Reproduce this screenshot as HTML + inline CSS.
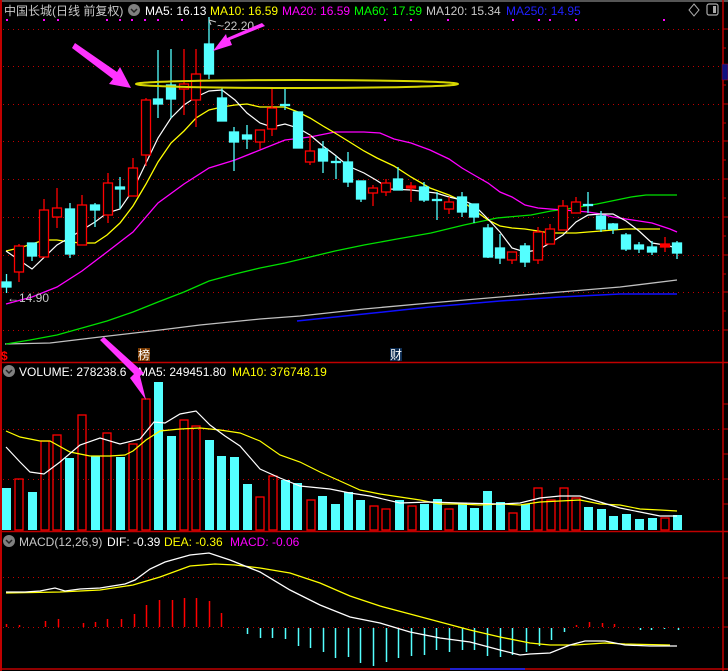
<!DOCTYPE html>
<html><head><meta charset="utf-8"><style>
html,body{margin:0;padding:0;background:#000;width:728px;height:671px;overflow:hidden}
svg{display:block}
text{font-family:"Liberation Sans","Noto Sans CJK SC",sans-serif;font-size:12px}
</style></head><body>
<svg width="728" height="671" viewBox="0 0 728 671" xmlns="http://www.w3.org/2000/svg">
<rect width="728" height="671" fill="#000"/>
<line x1="0" y1="1" x2="728" y2="1" stroke="#555" stroke-width="2"/>
<line x1="1" y1="0" x2="1" y2="671" stroke="#c00000" stroke-width="2"/>
<line x1="723" y1="0" x2="723" y2="671" stroke="#c00000" stroke-width="1.5"/>
<line x1="0" y1="362.5" x2="728" y2="362.5" stroke="#c00000" stroke-width="1.5"/>
<line x1="0" y1="531.5" x2="728" y2="531.5" stroke="#c00000" stroke-width="1.5"/>
<line x1="0" y1="669" x2="728" y2="669" stroke="#c00000" stroke-width="1.5"/>
<line x1="450" y1="669" x2="525" y2="669" stroke="#2020d0" stroke-width="2"/>
<g stroke="#c00000" stroke-width="1">
<line x1="723" y1="29" x2="728" y2="29"/><line x1="723" y1="48" x2="726" y2="48"/><line x1="723" y1="66" x2="728" y2="66"/><line x1="723" y1="85" x2="726" y2="85"/><line x1="723" y1="104" x2="728" y2="104"/><line x1="723" y1="123" x2="726" y2="123"/><line x1="723" y1="141" x2="728" y2="141"/><line x1="723" y1="160" x2="726" y2="160"/><line x1="723" y1="179" x2="728" y2="179"/><line x1="723" y1="198" x2="726" y2="198"/><line x1="723" y1="217" x2="728" y2="217"/><line x1="723" y1="236" x2="726" y2="236"/><line x1="723" y1="255" x2="728" y2="255"/><line x1="723" y1="274" x2="726" y2="274"/><line x1="723" y1="292" x2="728" y2="292"/><line x1="723" y1="311" x2="726" y2="311"/><line x1="723" y1="330" x2="728" y2="330"/>
<line x1="723" y1="404" x2="728" y2="404"/><line x1="723" y1="429" x2="728" y2="429"/><line x1="723" y1="454" x2="728" y2="454"/><line x1="723" y1="479" x2="728" y2="479"/><line x1="723" y1="504" x2="728" y2="504"/>
<line x1="723" y1="578" x2="728" y2="578"/><line x1="723" y1="627" x2="728" y2="627"/>
</g>
<rect x="722" y="64" width="6" height="16" fill="#101080" stroke="#c00000" stroke-width="0.5"/>
<g stroke="#c00000" stroke-width="1" stroke-dasharray="1,4">
<line x1="3" y1="29.5" x2="722" y2="29.5"/><line x1="3" y1="66.5" x2="722" y2="66.5"/><line x1="3" y1="104.5" x2="722" y2="104.5"/><line x1="3" y1="141.5" x2="722" y2="141.5"/><line x1="3" y1="179.5" x2="722" y2="179.5"/><line x1="3" y1="217.5" x2="722" y2="217.5"/><line x1="3" y1="255.5" x2="722" y2="255.5"/><line x1="3" y1="292.5" x2="722" y2="292.5"/><line x1="3" y1="330.5" x2="722" y2="330.5"/>
<line x1="3" y1="429.5" x2="722" y2="429.5"/><line x1="3" y1="479.5" x2="722" y2="479.5"/>
<line x1="3" y1="577.5" x2="722" y2="577.5"/><line x1="3" y1="627.5" x2="722" y2="627.5"/>
</g>
<g fill="#ff00ff"><rect x="6" y="19" width="2" height="2"/><rect x="43" y="19" width="2" height="2"/><rect x="57" y="19" width="2" height="2"/><rect x="106" y="19" width="2" height="2"/><rect x="119" y="19" width="2" height="2"/><rect x="131" y="19" width="2" height="2"/><rect x="144" y="19" width="2" height="2"/><rect x="157" y="19" width="2" height="2"/><rect x="181" y="19" width="2" height="2"/><rect x="384" y="19" width="2" height="2"/><rect x="410" y="19" width="2" height="2"/><rect x="447" y="19" width="2" height="2"/><rect x="512" y="19" width="2" height="2"/><rect x="538" y="19" width="2" height="2"/><rect x="549" y="19" width="2" height="2"/><rect x="575" y="19" width="2" height="2"/><rect x="663" y="19" width="2" height="2"/></g>
<text x="4" y="15" fill="#c8c8c8">中国长城(日线 前复权)</text>
<circle cx="134" cy="10" r="6" fill="#808080"/><path d="M131 9 L134 12 L137 9" stroke="#222" stroke-width="1.5" fill="none"/>
<text x="145" y="15" fill="#ffffff">MA5: 16.13</text>
<text x="210" y="15" fill="#ffff00">MA10: 16.59</text>
<text x="282" y="15" fill="#ff00ff">MA20: 16.59</text>
<text x="354" y="15" fill="#00ff00">MA60: 17.59</text>
<text x="426" y="15" fill="#c8c8c8">MA120: 15.34</text>
<text x="506" y="15" fill="#2020ff">MA250: 14.95</text>
<path d="M694 4 L699 10 L694 16 L689 10 Z" stroke="#aaa" fill="none"/>
<rect x="707" y="4" width="11" height="11" rx="2" stroke="#aaa" fill="none" stroke-width="1.2"/><rect x="713" y="6" width="3" height="7" fill="#aaa"/>
<polyline fill="none" stroke="#c0c0c0" stroke-width="1.3" points="5,344 50,343 100,337 160,330 200,325 260,319 300,316 364,309 430,303 500,297 560,292 620,287 677,280"/>
<polyline fill="none" stroke="#1010ff" stroke-width="1.5" points="297,321 364,314 430,307 500,301 560,297 620,294 677,294"/>
<polyline fill="none" stroke="#00e000" stroke-width="1.3" points="6,344 30,340 57,335 82,328 107,321 133,312 158,302 184,292 209,281 235,274 260,268 285,263 310,257 335,251 364,245 397,239 431,233 464,225 497,218 531,215 551,211 567,209 597,204 631,197 646,195 677,195"/>
<polyline fill="none" stroke="#ff00ff" stroke-width="1.3" points="6,304 32,297 57,287 82,271 107,252 133,232 158,203 184,184 209,168 235,160 260,150 285,140 310,137 335,132 364,132 380,133 394,139 411,143 430,150 449,159 462,168 474,175 488,183 500,192 512,197 525,205 538,208 550,209 563,210 576,211 588,212 601,214 613,217 626,219 652,223 670,229 677,232"/>
<polyline fill="none" stroke="#ffff00" stroke-width="1.3" points="6,251 19,248 32,244 44,240 57,240 69,242 82,243 95,243 107,235 120,223 133,206 146,184 158,162 171,143 184,131 196,118 209,110 222,107 235,105 247,104 260,107 272,107 285,107 298,112 310,118 323,126 335,133 348,141 364,151 377,158 394,166 411,177 430,188 449,195 462,201 474,210 488,220 500,226 512,228 525,229 538,231 550,233 563,233 576,233 588,232 601,231 613,230 626,229 639,229 660,229"/>
<polyline fill="none" stroke="#ffffff" stroke-width="1.2" points="6,251 32,269 57,245 69,238 95,222 107,213 120,209 133,190 146,163 158,138 171,118 184,105 196,97 209,91 222,90 235,100 247,113 260,123 272,127 285,124 298,128 310,135 323,146 335,155 348,166 364,173 376,180 390,189 411,190 436,193 449,197 462,200 474,205 488,219 500,232 512,248 525,252 538,250 550,243 563,235 576,222 588,215 601,214 613,214 626,221 639,231 652,243 665,245 677,248"/>
<g stroke-width="1.3">
<g stroke="#54ffff" fill="#54ffff">
<line x1="6.5" y1="274" x2="6.5" y2="293"/><rect x="2" y="282" width="9" height="5"/>
<line x1="32" y1="243" x2="32" y2="261"/><rect x="27.5" y="243" width="9" height="13"/>
<line x1="70" y1="203" x2="70" y2="258"/><rect x="65.5" y="209" width="9" height="45"/>
<line x1="95" y1="203" x2="95" y2="227"/><rect x="90.5" y="205" width="9" height="5"/>
<line x1="120" y1="177" x2="120" y2="209"/><rect x="115.5" y="187" width="9" height="2"/>
<line x1="158" y1="50" x2="158" y2="118"/><rect x="153.5" y="99" width="9" height="5"/>
<line x1="171" y1="49" x2="171" y2="118"/><rect x="166.5" y="85" width="9" height="14"/>
<line x1="209" y1="17" x2="209" y2="79"/><rect x="204.5" y="44" width="9" height="30"/>
<line x1="222" y1="88" x2="222" y2="121"/><rect x="217.5" y="98" width="9" height="23"/>
<line x1="234" y1="127" x2="234" y2="171"/><rect x="229.5" y="132" width="9" height="10"/>
<line x1="247" y1="125" x2="247" y2="149"/><rect x="242.5" y="135" width="9" height="4"/>
<line x1="285" y1="89" x2="285" y2="110"/><rect x="280.5" y="104.5" width="9" height="1"/>
<line x1="298" y1="112" x2="298" y2="148"/><rect x="293.5" y="112" width="9" height="36"/>
<line x1="323" y1="141" x2="323" y2="173"/><rect x="318.5" y="149" width="9" height="12"/>
<line x1="336" y1="156" x2="336" y2="179"/><rect x="331.5" y="161.5" width="9" height="1"/>
<line x1="348" y1="152" x2="348" y2="187"/><rect x="343.5" y="162" width="9" height="20"/>
<line x1="361" y1="181" x2="361" y2="202"/><rect x="356.5" y="181" width="9" height="18"/>
<line x1="398" y1="167" x2="398" y2="190"/><rect x="393.5" y="179" width="9" height="11"/>
<line x1="424" y1="182" x2="424" y2="202"/><rect x="419.5" y="187" width="9" height="13"/>
<line x1="437" y1="192" x2="437" y2="220"/><rect x="432.5" y="199.5" width="9" height="1"/>
<line x1="462" y1="192" x2="462" y2="217"/><rect x="457.5" y="197" width="9" height="15"/>
<line x1="474" y1="204" x2="474" y2="223"/><rect x="469.5" y="204" width="9" height="13"/>
<line x1="488" y1="224" x2="488" y2="258"/><rect x="483.5" y="228" width="9" height="29"/>
<line x1="500" y1="234" x2="500" y2="264"/><rect x="495.5" y="248" width="9" height="10"/>
<line x1="525" y1="243" x2="525" y2="267"/><rect x="520.5" y="246" width="9" height="16"/>
<line x1="588" y1="192" x2="588" y2="213"/><rect x="583.5" y="204.5" width="9" height="1"/>
<line x1="601" y1="211" x2="601" y2="232"/><rect x="596.5" y="216" width="9" height="13"/>
<line x1="613" y1="223" x2="613" y2="234"/><rect x="608.5" y="224" width="9" height="5"/>
<line x1="626" y1="233" x2="626" y2="251"/><rect x="621.5" y="235" width="9" height="14"/>
<line x1="639" y1="242" x2="639" y2="253"/><rect x="634.5" y="245" width="9" height="4"/>
<line x1="652" y1="241" x2="652" y2="255"/><rect x="647.5" y="247" width="9" height="5"/>
<line x1="677" y1="241" x2="677" y2="259"/><rect x="672.5" y="243" width="9" height="10"/>
</g>
<g stroke="#ff0000" fill="#000">
<line x1="19" y1="244" x2="19" y2="282"/><rect x="14.5" y="246" width="9" height="26"/>
<line x1="44" y1="199" x2="44" y2="257"/><rect x="39.5" y="210" width="9" height="47"/>
<line x1="57" y1="188" x2="57" y2="228"/><rect x="52.5" y="208" width="9" height="9"/>
<line x1="82" y1="195" x2="82" y2="245"/><rect x="77.5" y="205" width="9" height="40"/>
<line x1="108" y1="173" x2="108" y2="223"/><rect x="103.5" y="183" width="9" height="32"/>
<line x1="133" y1="158" x2="133" y2="196"/><rect x="128.5" y="168" width="9" height="28"/>
<line x1="146" y1="98" x2="146" y2="166"/><rect x="141.5" y="100" width="9" height="55"/>
<line x1="184" y1="49" x2="184" y2="115"/><rect x="179.5" y="84" width="9" height="5"/>
<line x1="196" y1="49" x2="196" y2="127"/><rect x="191.5" y="74" width="9" height="26"/>
<line x1="260" y1="130" x2="260" y2="149"/><rect x="255.5" y="130" width="9" height="12"/>
<line x1="272" y1="89" x2="272" y2="136"/><rect x="267.5" y="108" width="9" height="21"/>
<line x1="310" y1="135" x2="310" y2="165"/><rect x="305.5" y="151" width="9" height="11"/>
<line x1="373" y1="185" x2="373" y2="206"/><rect x="368.5" y="188" width="9" height="5"/>
<line x1="386" y1="179" x2="386" y2="196"/><rect x="381.5" y="183" width="9" height="9"/>
<line x1="411" y1="182" x2="411" y2="202"/><rect x="406.5" y="186" width="9" height="2" fill="#ff0000"/>
<line x1="449" y1="197" x2="449" y2="214"/><rect x="444.5" y="202" width="9" height="7"/>
<line x1="512" y1="252" x2="512" y2="264"/><rect x="507.5" y="252" width="9" height="8"/>
<line x1="538" y1="227" x2="538" y2="264"/><rect x="533.5" y="232" width="9" height="28"/>
<line x1="550" y1="224" x2="550" y2="244"/><rect x="545.5" y="229" width="9" height="15"/>
<line x1="563" y1="200" x2="563" y2="230"/><rect x="558.5" y="206" width="9" height="24"/>
<line x1="576" y1="197" x2="576" y2="213"/><rect x="571.5" y="202" width="9" height="11"/>
<line x1="665" y1="237" x2="665" y2="252"/><rect x="660.5" y="244" width="9" height="3" fill="#ff0000"/>
</g>
</g>
<ellipse cx="297" cy="84" rx="161" ry="4" fill="none" stroke="#d8d800" stroke-width="2"/>
<path d="M209 20 L216 22 M209 20 L211 25" stroke="#c8c8c8" fill="none"/>
<text x="217" y="30" fill="#c8c8c8">~22.20</text>
<text x="7" y="302" fill="#c8c8c8">←14.90</text>
<rect x="138" y="348" width="12" height="13" fill="#7a3a00"/><text x="138" y="359" fill="#fff">榜</text>
<rect x="390" y="348" width="12" height="13" fill="#0a2a50"/><text x="390" y="359" fill="#fff">财</text>
<text x="1" y="360" fill="#ff0000" font-weight="bold">$</text>
<circle cx="9" cy="371" r="6" fill="#808080"/><path d="M6 370 L9 373 L12 370" stroke="#222" stroke-width="1.5" fill="none"/>
<text x="19" y="376" fill="#ffffff">VOLUME: 278238.6</text>
<text x="138" y="376" fill="#ffffff">MA5: 249451.80</text>
<text x="232" y="376" fill="#ffff00">MA10: 376748.19</text>
<g fill="#54ffff">
<rect x="2" y="488" width="9" height="42"/><rect x="28" y="492" width="9" height="38"/><rect x="65" y="458" width="9" height="72"/><rect x="91" y="456" width="9" height="74"/><rect x="116" y="457" width="9" height="73"/><rect x="154" y="382" width="9" height="148"/><rect x="167" y="436" width="9" height="94"/><rect x="205" y="440" width="9" height="90"/><rect x="217" y="456" width="9" height="74"/><rect x="230" y="457" width="9" height="73"/><rect x="243" y="484" width="9" height="46"/><rect x="281" y="480" width="9" height="50"/><rect x="293" y="483" width="9" height="47"/><rect x="318" y="496" width="9" height="34"/><rect x="331" y="504" width="9" height="26"/><rect x="344" y="492" width="9" height="38"/><rect x="356" y="500" width="9" height="30"/><rect x="395" y="500" width="9" height="30"/><rect x="420" y="504" width="9" height="26"/><rect x="433" y="499" width="9" height="31"/><rect x="458" y="503" width="9" height="27"/><rect x="470" y="508" width="9" height="22"/><rect x="483" y="491" width="9" height="39"/><rect x="496" y="502" width="9" height="28"/><rect x="521" y="504" width="9" height="26"/><rect x="584" y="507" width="9" height="23"/><rect x="597" y="509" width="9" height="21"/><rect x="609" y="516" width="9" height="14"/><rect x="622" y="514" width="9" height="16"/><rect x="635" y="519" width="9" height="11"/><rect x="648" y="518" width="9" height="12"/><rect x="673" y="515" width="9" height="15"/>
</g>
<g fill="none" stroke="#ff0000" stroke-width="1.3">
<rect x="15" y="479" width="8" height="51"/><rect x="41" y="441" width="8" height="89"/><rect x="53" y="435" width="8" height="95"/><rect x="78" y="415" width="8" height="115"/><rect x="103" y="433" width="8" height="97"/><rect x="129" y="444" width="8" height="86"/><rect x="142" y="399" width="8" height="131"/><rect x="180" y="420" width="8" height="110"/><rect x="192" y="426" width="8" height="104"/><rect x="256" y="497" width="8" height="33"/><rect x="269" y="476" width="8" height="54"/><rect x="307" y="500" width="8" height="30"/><rect x="370" y="506" width="8" height="24"/><rect x="382" y="509" width="8" height="21"/><rect x="408" y="506" width="8" height="24"/><rect x="445" y="509" width="8" height="21"/><rect x="509" y="513" width="8" height="17"/><rect x="534" y="488" width="8" height="42"/><rect x="547" y="500" width="8" height="30"/><rect x="560" y="488" width="8" height="42"/><rect x="572" y="498" width="8" height="32"/><rect x="661" y="518" width="8" height="12"/>
</g>
<polyline fill="none" stroke="#ffff00" stroke-width="1.2" points="6,431 20,437 40,441 50,441 70,452 90,456 110,456 125,455 133,451 146,440 160,431 180,429 200,428 220,430 240,433 260,441 280,455 300,462 320,472 340,481 360,490 380,494 400,497 420,500 440,504 460,504 480,505 500,504 520,505 540,502 560,501 580,500 600,504 620,505 640,509 660,510 677,511"/>
<polyline fill="none" stroke="#ffffff" stroke-width="1.2" points="6,447 20,462 30,472 44,474 60,462 80,445 100,438 120,444 140,439 154,422 165,423 180,414 196,411 210,425 225,436 240,446 260,469 280,478 300,486 330,489 350,493 370,496 400,503 430,502 460,503 500,504 520,503 540,498 560,496 580,496 600,502 620,508 640,512 660,516 677,516"/>
<circle cx="9" cy="541" r="6" fill="#808080"/><path d="M6 540 L9 543 L12 540" stroke="#222" stroke-width="1.5" fill="none"/>
<text x="19" y="546" fill="#c8c8c8">MACD(12,26,9)</text>
<text x="107" y="546" fill="#ffffff">DIF: -0.39</text>
<text x="164" y="546" fill="#ffff00">DEA: -0.36</text>
<text x="230" y="546" fill="#ff00ff">MACD: -0.06</text>
<g stroke="#ff0000" stroke-width="1.5">
<line x1="6.5" y1="627" x2="6.5" y2="624"/><line x1="19.5" y1="627" x2="19.5" y2="625"/><line x1="45.5" y1="627" x2="45.5" y2="621"/><line x1="58.5" y1="627" x2="58.5" y2="619"/><line x1="83.5" y1="627" x2="83.5" y2="623"/><line x1="95.5" y1="627" x2="95.5" y2="622"/><line x1="107.5" y1="627" x2="107.5" y2="619"/><line x1="121.5" y1="627" x2="121.5" y2="619"/><line x1="134.5" y1="627" x2="134.5" y2="614"/><line x1="146.5" y1="627" x2="146.5" y2="605"/><line x1="159.5" y1="627" x2="159.5" y2="600"/><line x1="172.5" y1="627" x2="172.5" y2="600"/><line x1="184.5" y1="627" x2="184.5" y2="598"/><line x1="196.5" y1="627" x2="196.5" y2="598"/><line x1="209.5" y1="627" x2="209.5" y2="601"/><line x1="221.5" y1="627" x2="221.5" y2="613"/><line x1="576.5" y1="627" x2="576.5" y2="625"/><line x1="589.5" y1="627" x2="589.5" y2="622"/><line x1="602.5" y1="627" x2="602.5" y2="623"/><line x1="614.5" y1="627" x2="614.5" y2="624"/>
</g>
<g stroke="#54ffff" stroke-width="1.5">
<line x1="247.5" y1="628" x2="247.5" y2="634"/><line x1="260.5" y1="628" x2="260.5" y2="638"/><line x1="272.5" y1="628" x2="272.5" y2="638"/><line x1="285.5" y1="628" x2="285.5" y2="639"/><line x1="298.5" y1="628" x2="298.5" y2="646"/><line x1="310.5" y1="628" x2="310.5" y2="648"/><line x1="323.5" y1="628" x2="323.5" y2="652"/><line x1="335.5" y1="628" x2="335.5" y2="658"/><line x1="348.5" y1="628" x2="348.5" y2="657"/><line x1="360.5" y1="628" x2="360.5" y2="663"/><line x1="373.5" y1="628" x2="373.5" y2="666"/><line x1="386.5" y1="628" x2="386.5" y2="662"/><line x1="398.5" y1="628" x2="398.5" y2="658"/><line x1="411.5" y1="628" x2="411.5" y2="656"/><line x1="424.5" y1="628" x2="424.5" y2="655"/><line x1="436.5" y1="628" x2="436.5" y2="650"/><line x1="449.5" y1="628" x2="449.5" y2="652"/><line x1="462.5" y1="628" x2="462.5" y2="650"/><line x1="474.5" y1="628" x2="474.5" y2="650"/><line x1="487.5" y1="628" x2="487.5" y2="656"/><line x1="500.5" y1="628" x2="500.5" y2="657"/><line x1="512.5" y1="628" x2="512.5" y2="655"/><line x1="526.5" y1="628" x2="526.5" y2="652"/><line x1="539.5" y1="628" x2="539.5" y2="646"/><line x1="551.5" y1="628" x2="551.5" y2="640"/><line x1="564.5" y1="628" x2="564.5" y2="632"/><line x1="640.5" y1="628" x2="640.5" y2="630"/><line x1="651.5" y1="628" x2="651.5" y2="630"/><line x1="664.5" y1="628" x2="664.5" y2="629"/><line x1="678.5" y1="628" x2="678.5" y2="630"/>
</g>
<polyline fill="none" stroke="#ffff00" stroke-width="1.3" points="6,593 60,592 100,590 133,585 160,577 190,566 215,564 235,565 260,568 290,573 320,583 350,596 380,606 410,614 440,622 470,630 500,637 530,643 550,645 575,645 605,643 625,644 670,645"/>
<polyline fill="none" stroke="#ffffff" stroke-width="1.3" points="6,592 25,592 40,591 55,588 65,591 80,589 100,588 125,584 135,580 150,569 165,562 190,555 209,553 230,560 260,572 290,590 320,605 350,617 380,623 410,632 440,638 470,642 500,650 520,655 530,654 550,653 570,645 585,641 605,641 625,645 650,646 677,646"/>
<g fill="#ff33ff">
<polygon points="75,43 117,72 120,67 131,88 109,84 113,79 72,48"/>
<polygon points="265,26 230,40 232,45 213,51 226,34 227,38 262,23"/>
<polygon points="100,340 134,374 130,378 146,400 140,376 144,373 104,337"/>
</g>
</svg>
</body></html>
